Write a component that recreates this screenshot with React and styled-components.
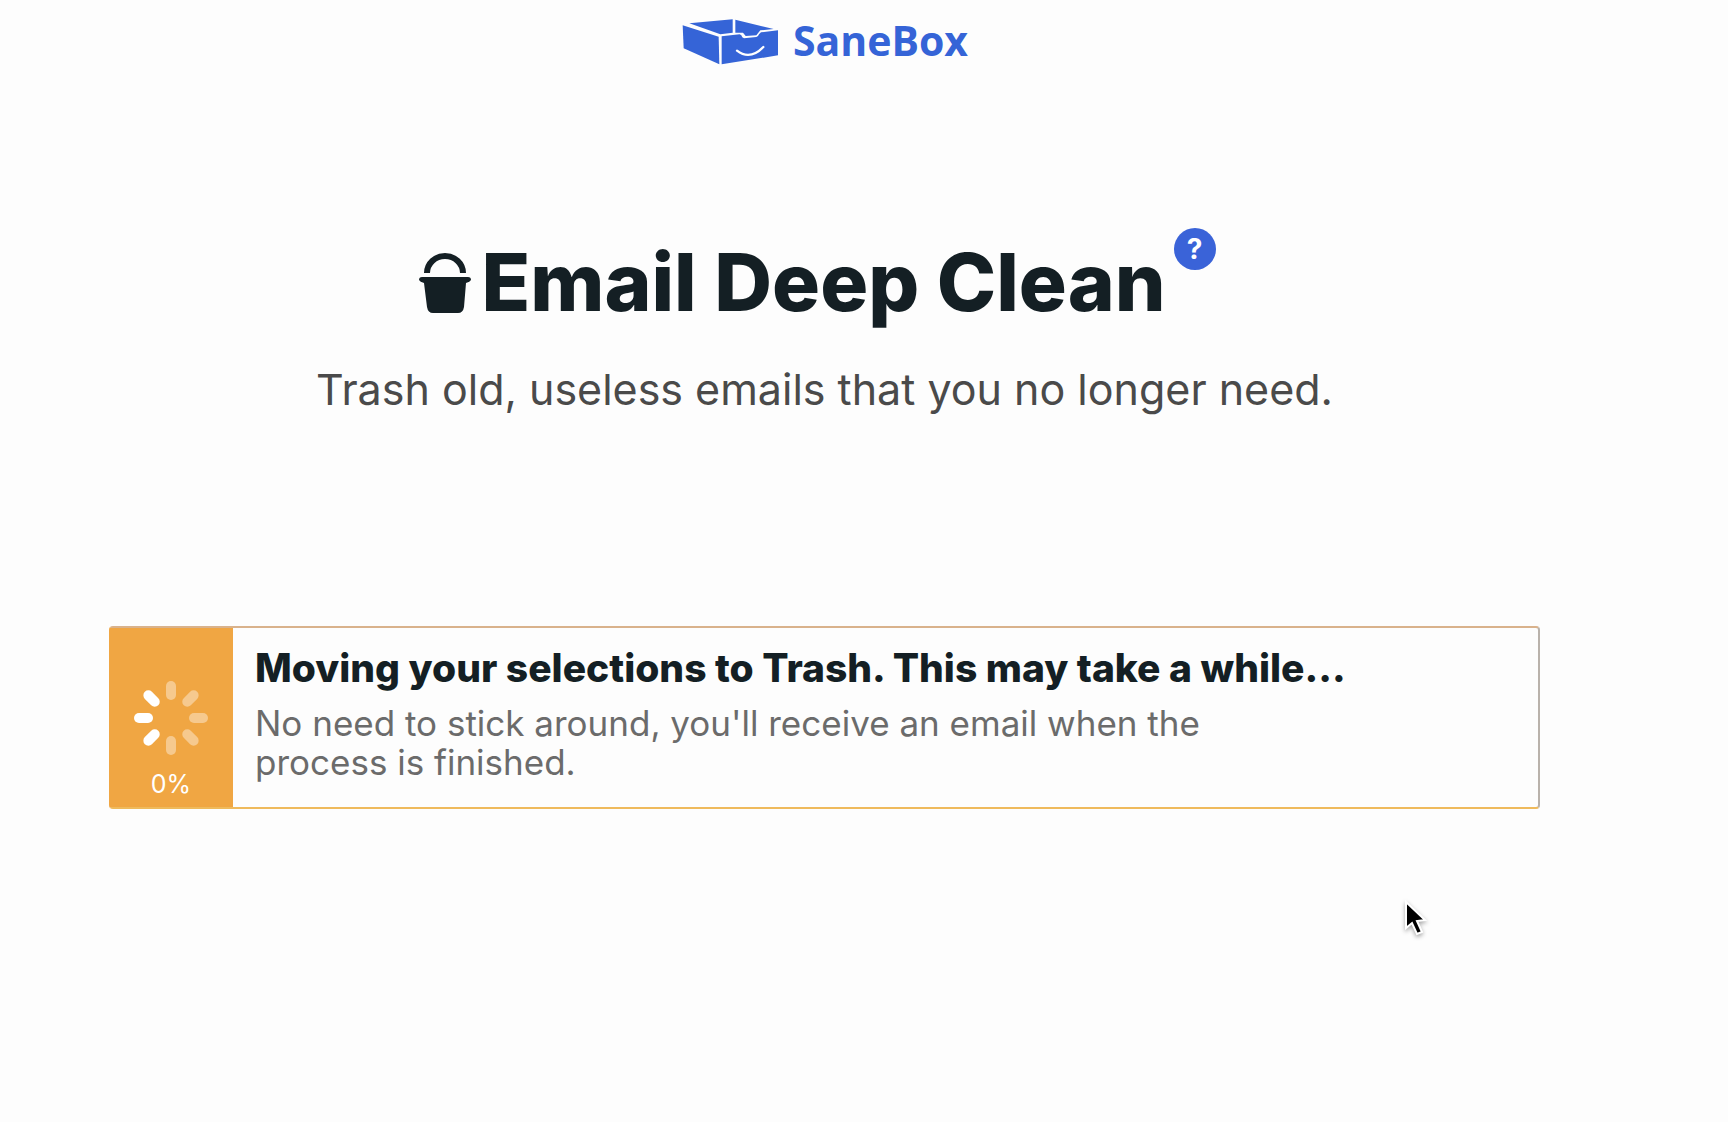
import React from "react";
import styled, { createGlobalStyle } from "styled-components";

const GlobalStyle = createGlobalStyle`
* {
  box-sizing: border-box;
}
body {
  margin: 0;
  background: #fdfdfd;
  font-family: Inter, "Liberation Sans", sans-serif;
}
`;

const Page = styled.div`
display: flex;
flex-direction: column;
min-height: 100vh;
padding: 12px 188px 0 109px;
`;

const LogoLink = styled.a`
display: flex;
align-items: flex-start;
align-self: center;
gap: 14px;
color: #3564d7;
font-family: "Open Sans", "Noto Sans", sans-serif;
font-size: 41px;
font-weight: 700;
line-height: 56px;
text-decoration: none;
`;

const LogoMark = styled.svg`
width: 98px;
height: 48px;
margin-top: 6px;
`;

const Hero = styled.header`
display: flex;
flex-direction: column;
align-items: center;
padding-top: 160px;
`;

const TitleRow = styled.div`
display: flex;
align-items: flex-start;
padding-right: 14px;
`;

const BucketIcon = styled.svg`
width: 52px;
height: 60px;
margin-top: 25px;
margin-right: 10px;
`;

const Title = styled.h1`
margin: 8px 0 0;
color: #141f24;
font-size: 80px;
font-weight: 800;
line-height: 92px;
white-space: nowrap;
`;

const HelpButton = styled.button`
width: 42px;
height: 42px;
margin-left: 8px;
padding: 0;
border: none;
border-radius: 50%;
background: #3a63d8;
color: white;
font-family: inherit;
font-size: 28px;
font-weight: 700;
line-height: 42px;
cursor: pointer;
`;

const Subtitle = styled.p`
margin: 35px 0 0;
color: #4a4a4a;
font-size: 43px;
line-height: 52px;
white-space: nowrap;
`;

const Alert = styled.section`
display: flex;
margin-top: 211px;
border: 2px solid;
border-color: #d9b28c #b9b2ab #efba5c #f0a643;
border-radius: 4px;
`;

const AlertStatus = styled.div`
display: flex;
flex-direction: column;
align-items: center;
justify-content: flex-end;
width: 122px;
padding-right: 2px;
padding-bottom: 7px;
background: #f0a643;
color: white;
font-size: 25px;
line-height: 32px;
`;

const Spinner = styled.svg`
width: 76px;
height: 76px;
margin-bottom: 12px;
`;

const AlertContent = styled.div`
flex: 1;
padding: 16px 22px 25px;
`;

const AlertTitle = styled.h2`
margin: 0 0 12px;
color: #141f24;
font-size: 39px;
font-weight: 800;
line-height: 48px;
white-space: nowrap;
`;

const AlertText = styled.p`
max-width: 1000px;
margin: 0;
color: #6b6b6b;
font-size: 35px;
line-height: 39px;
`;

const Pointer = styled.svg`
position: fixed;
top: 900px;
left: 1402px;
width: 30px;
height: 40px;
filter: drop-shadow(0 2px 2px rgba(0, 0, 0, 0.35));
pointer-events: none;
`;

const spokes = [
  { angle: 0, opacity: 0.4 },
  { angle: 45, opacity: 0.4 },
  { angle: 90, opacity: 0.4 },
  { angle: 135, opacity: 0.4 },
  { angle: 180, opacity: 0.4 },
  { angle: 225, opacity: 1 },
  { angle: 270, opacity: 1 },
  { angle: 315, opacity: 1 },
];

const Logo = () => (
  <LogoLink href="/">
    <LogoMark viewBox="30 54 294 144" fill="#3564d7" aria-hidden="true">
      <path d="M35 76 L143 110 L145 193 L38 145 Z" />
      <path d="M55 70 L185 58 L185 98 L148 103 Z" />
      <path d="M193 59 L308 87 L268 91 L262 98 L256 106 L224 108 L216 98 L193 98 Z" />
      <path d="M152 109 L206 103 Q212 104 214 112 L219 115 L256 111 Q262 110 264 103 L270 97 L321 91 L321 166 L152 193 Z" />
      <path d="M198 152 Q237 182 277 141" fill="none" stroke="white" strokeWidth="7" strokeLinecap="round" />
    </LogoMark>
    SaneBox
  </LogoLink>
);

const App = () => {
  const progress = 0;

  return (
    <>
      <GlobalStyle />
      <Page>
        <Logo />

        <Hero>
          <TitleRow>
            <BucketIcon viewBox="0 0 52 60" fill="#141f24" aria-hidden="true">
              <path d="M8 20 A18 17 0 0 1 44 20" fill="none" stroke="#141f24" strokeWidth="6" />
              <path d="M3 24 H49 Q52 24 52 27 Q51 29 47 30 L45 54 Q44 60 39 60 H14 Q9 60 8 54 L5 30 Q1 29 0 27 Q0 24 3 24 Z" />
            </BucketIcon>
            <Title>Email Deep Clean</Title>
            <HelpButton type="button" aria-label="What is Email Deep Clean?">?</HelpButton>
          </TitleRow>
          <Subtitle>Trash old, useless emails that you no longer need.</Subtitle>
        </Hero>

        <Alert role="status">
          <AlertStatus>
            <Spinner viewBox="-38 -38 76 76" aria-hidden="true">
              {spokes.map(({ angle, opacity }) => (
                <rect key={angle} x="-5" y="-37" width="10" height="19" rx="5" fill="white" opacity={opacity} transform={`rotate(${angle})`} />
              ))}
            </Spinner>
            {progress}%
          </AlertStatus>
          <AlertContent>
            <AlertTitle>Moving your selections to Trash. This may take a while...</AlertTitle>
            <AlertText>No need to stick around, you'll receive an email when the process is finished.</AlertText>
          </AlertContent>
        </Alert>
      </Page>

      <Pointer viewBox="0 0 30 40" aria-hidden="true">
        <path d="M4 2 L4 28 L10 23 L15 34 L20 32 L15 21 L23 20 Z" fill="black" stroke="white" strokeWidth="2" />
      </Pointer>
    </>
  );
};

export default App;
